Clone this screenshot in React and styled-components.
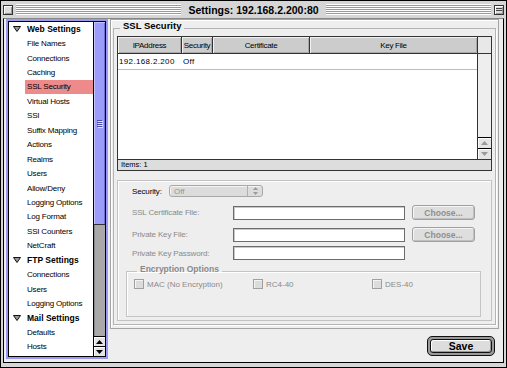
import React from 'react'
import styled, { createGlobalStyle } from 'styled-components'

const GlobalStyle = createGlobalStyle`
  body {
    margin: 0;
    background: #fff;
  }
  * {
    box-sizing: border-box;
  }
`

const sans = `"Liberation Sans", Arial, sans-serif`

const Window = styled.div`
  width: 507px;
  height: 368px;
  border: 1px solid #000;
  background: #d6d6d6;
  display: flex;
  flex-direction: column;
  font-family: ${sans};
  color: #000;
`

const TitleBar = styled.div`
  height: 17px;
  flex: none;
  display: flex;
  align-items: center;
  gap: 3px;
  padding: 0 2px;
`

const Stripes = styled.div`
  flex: 1;
  height: 11px;
  background: repeating-linear-gradient(to bottom, #fff 0 1px, #9a9a9a 1px 2px);
`

const Title = styled.div`
  font: bold 10.5px ${sans};
  padding: 0 4px;
  white-space: nowrap;
`

const WidgetBox = styled.div`
  width: 10px;
  height: 10px;
  border: 1px solid #333;
  background: #ddd;
  box-shadow: inset 1px 1px 0 #fff, inset -1px -1px 0 #999;
  display: flex;
  flex-direction: column;
  justify-content: center;
  gap: 1px;
  padding: 0 1px;
`

const ShadeLine = styled.div`
  height: 1px;
  background: #444;
`

const Content = styled.div`
  flex: 1;
  margin: 0 2px 4px 2px;
  border: 1px solid #000;
  border-top-color: #888;
  background: #eeeeee;
  padding: 0 4px 3px 2px;
  display: flex;
  gap: 2px;
  min-height: 0;
`

const Sidebar = styled.div`
  width: 102px;
  flex: none;
  border: 2px solid #9a9af2;
  display: flex;
`

const SidebarInner = styled.div`
  flex: 1;
  border: 1px solid #000;
  display: flex;
`

const List = styled.div`
  flex: 1;
  background: #fff;
  overflow: hidden;
`

const Row = styled.div`
  height: 14.45px;
  display: flex;
  align-items: center;
  padding-left: ${p => (p.$header ? '4px' : '16px')};
  gap: 6px;
`

const HeaderLabel = styled.span`
  font: bold 8.5px ${sans};
  white-space: nowrap;
`

const ItemLabel = styled.span`
  flex: 1;
  height: 100%;
  display: flex;
  align-items: center;
  padding-left: 2px;
  font-size: 8px;
  letter-spacing: -0.2px;
  white-space: nowrap;
  background: ${p => (p.$selected ? '#ef8a8a' : 'transparent')};
`

const SideScroll = styled.div`
  width: 12px;
  flex: none;
  border-left: 1px solid #000;
  display: flex;
  flex-direction: column;
`

const Thumb = styled.div`
  height: 203px;
  background: #9c9cfa;
  border-bottom: 1px solid #333;
  box-shadow: inset 1px 1px 0 #c4c4ff, inset -1px 0 0 #7070d0;
  display: flex;
  flex-direction: column;
  justify-content: center;
  align-items: center;
  gap: 1px;
`

const Grip = styled.div`
  width: 5px;
  height: 1px;
  background: #4a4aa8;
  box-shadow: 1px 1px 0 #e0e0ff;
`

const Track = styled.div`
  flex: 1;
  background: #a9a9a9;
  box-shadow: inset 1px 0 0 #888;
`

const ArrowBox = styled.div`
  height: ${p => p.$h || 10}px;
  flex: none;
  border-top: 1px solid #000;
  background: #e4e4e4;
  box-shadow: inset 1px 1px 0 #fff;
  display: flex;
  align-items: center;
  justify-content: center;
`

const RightCol = styled.div`
  flex: 1;
  min-width: 0;
  display: flex;
  flex-direction: column;
`

const Panel = styled.div`
  height: 310px;
  flex: none;
  border: 1px solid #a4a4a4;
  box-shadow: inset 1px 1px 0 #fff;
  padding: 1px 2px 3px 2px;
  display: flex;
  flex-direction: column;
  min-width: 0;
`

const Group = styled.fieldset`
  flex: 1;
  margin: 0;
  border: 1px solid #b4b4b4;
  box-shadow: 1px 1px 0 #fff;
  padding: 0 3px 3px 3px;
  display: flex;
  flex-direction: column;
  min-width: 0;
`

const Legend = styled.legend`
  font: bold ${p => p.$size || 9.5}px ${sans};
  color: ${p => (p.$muted ? '#8a8a8a' : '#000')};
  line-height: 9px;
  padding: 0 3px ${p => p.$pad || 6}px 3px;
  margin-left: 3px;
`

const Table = styled.div`
  height: 135px;
  flex: none;
  border: 1px solid #333;
  background: #fff;
  display: flex;
  flex-direction: column;
`

const TableMain = styled.div`
  flex: 1;
  display: flex;
`

const TableBody = styled.div`
  flex: 1;
  min-width: 0;
  display: flex;
  flex-direction: column;
`

const HeadRow = styled.div`
  height: 17px;
  flex: none;
  display: flex;
  border-bottom: 1px solid #333;
`

const HeadCell = styled.div`
  width: ${p => (p.$w ? `${p.$w}px` : 'auto')};
  flex: ${p => (p.$w ? 'none' : 1)};
  background: #cccccc;
  border-right: ${p => (p.$last ? 'none' : '1px solid #333')};
  box-shadow: inset 1px 1px 0 #f2f2f2, inset -1px -1px 0 #a8a8a8;
  display: flex;
  align-items: center;
  justify-content: center;
  font-size: 8px;
  letter-spacing: -0.3px;
  white-space: nowrap;
`

const DataRow = styled.div`
  height: 16px;
  display: flex;
  align-items: center;
  border-bottom: 1px solid #f0a6ac;
  font-size: 8px;
  letter-spacing: 0.35px;
`

const DataCell = styled.div`
  width: ${p => p.$w}px;
  padding-left: 1px;
  white-space: nowrap;
`

const TableScroll = styled.div`
  width: 14px;
  flex: none;
  border-left: 1px solid #333;
  display: flex;
  flex-direction: column;
`

const ScrollHead = styled.div`
  height: 17px;
  flex: none;
  border-bottom: 1px solid #333;
  background: #e8e8e8;
`

const ScrollTrack = styled.div`
  flex: 1;
  background: #eeeeee;
`

const Status = styled.div`
  height: 11px;
  flex: none;
  border-top: 1px solid #333;
  background: #dddddd;
  font-size: 7.5px;
  line-height: 10px;
  padding-left: 3px;
`

const Placard = styled.div`
  margin-top: 9px;
  height: 141px;
  flex: none;
  border: 1px solid #c2c2c2;
  box-shadow: inset 1px 1px 0 #fff;
  padding: 4px 0 5px 14px;
  display: flex;
  flex-direction: column;
  overflow: hidden;
`

const FieldRow = styled.div`
  display: flex;
  align-items: center;
  margin-top: ${p => p.$mt || 0}px;
  height: ${p => p.$h || 14}px;
`

const Label = styled.div`
  width: ${p => p.$w}px;
  flex: none;
  font-size: 8px;
  letter-spacing: -0.15px;
  color: ${p => (p.$muted ? '#8a8a8a' : '#000')};
  white-space: nowrap;
`

const Popup = styled.div`
  width: 94px;
  height: 12px;
  border: 1px solid #a8a8a8;
  border-radius: 3px;
  background: #dcdcdc;
  box-shadow: inset 1px 1px 0 #f4f4f4;
  display: flex;
  align-items: center;
  font-size: 8px;
  color: #959595;
`

const PopupText = styled.span`
  flex: 1;
  padding-left: 4px;
`

const PopupArrows = styled.span`
  width: 15px;
  height: 100%;
  border-left: 1px solid #b0b0b0;
  display: flex;
  align-items: center;
  justify-content: center;
`

const Input = styled.div`
  width: 172px;
  height: 14px;
  flex: none;
  border: 1px solid #6c6c6c;
  box-shadow: inset 1px 1px 0 #c8c8c8;
  background: #fff;
`

const ChooseButton = styled.div`
  width: 63px;
  height: 15px;
  margin-left: 7px;
  border: 1px solid #a0a0a0;
  border-radius: 3px;
  background: #dedede;
  box-shadow: inset 1px 1px 0 #f6f6f6, inset -1px -1px 0 #c0c0c0;
  display: flex;
  align-items: center;
  justify-content: center;
  font: bold 8.5px ${sans};
  color: #8e8e8e;
`

const EncGroup = styled.fieldset`
  margin: 5px 10px 0 -6px;
  height: 52px;
  flex: none;
  border: 1px solid #c4c4c4;
  box-shadow: inset 1px 1px 0 #fff;
  padding: 1px 0 0 7px;
  display: flex;
  align-items: flex-start;
  min-width: 0;
`

const CheckItem = styled.div`
  width: ${p => (p.$last ? 'auto' : '119px')};
  flex: none;
  display: flex;
  align-items: center;
  gap: 3px;
  font-size: 8px;
  color: #8a8a8a;
  white-space: nowrap;
`

const CheckBox = styled.span`
  width: 10px;
  height: 10px;
  border: 1px solid #a0a0a0;
  background: #dcdcdc;
  box-shadow: inset 1px 1px 0 #f4f4f4;
`

const Footer = styled.div`
  flex: 1;
  display: flex;
  justify-content: flex-end;
  align-items: flex-start;
  padding: 7px 4px 0 0;
`

const DefaultRing = styled.div`
  width: 68px;
  height: 20px;
  border: 1px solid #111;
  border-radius: 5px;
  background: #9a9a9a;
  padding: 2px;
  display: flex;
`

const SaveButton = styled.div`
  flex: 1;
  border: 1px solid #111;
  border-radius: 3px;
  background: #dddddd;
  box-shadow: inset 1px 1px 0 #fff, inset -1px -1px 0 #999;
  display: flex;
  align-items: center;
  justify-content: center;
  font: bold 10.5px ${sans};
`

const Disclosure = () => (
  <svg width="8" height="6" viewBox="0 0 8 6">
    <polygon points="0.5,0.5 7.5,0.5 4,5.5" fill="#9a9a9a" stroke="#111" strokeWidth="1" />
  </svg>
)

const Arrow = ({ up, color = '#000' }) => (
  <svg width="7" height="4" viewBox="0 0 7 4">
    <polygon points={up ? '3.5,0 7,4 0,4' : '0,0 7,0 3.5,4'} fill={color} />
  </svg>
)

const sidebarItems = [
  { label: 'Web Settings', header: true },
  { label: 'File Names' },
  { label: 'Connections' },
  { label: 'Caching' },
  { label: 'SSL Security', selected: true },
  { label: 'Virtual Hosts' },
  { label: 'SSI' },
  { label: 'Suffix Mapping' },
  { label: 'Actions' },
  { label: 'Realms' },
  { label: 'Users' },
  { label: 'Allow/Deny' },
  { label: 'Logging Options' },
  { label: 'Log Format' },
  { label: 'SSI Counters' },
  { label: 'NetCraft' },
  { label: 'FTP Settings', header: true },
  { label: 'Connections' },
  { label: 'Users' },
  { label: 'Logging Options' },
  { label: 'Mail Settings', header: true },
  { label: 'Defaults' },
  { label: 'Hosts' },
]

const columns = [
  { title: 'IPAddress', w: 64 },
  { title: 'Security', w: 31 },
  { title: 'Certificate', w: 97 },
  { title: 'Key File' },
]

const fileFields = [
  { label: 'SSL Certificate File:', mt: 8, choose: true },
  { label: 'Private Key File:', mt: 7, choose: true },
  { label: 'Private Key Password:', mt: 4 },
]

const ciphers = ['MAC (No Encryption)', 'RC4-40', 'DES-40']

export default function App() {
  return (
    <>
      <GlobalStyle />
      <Window>
        <TitleBar>
          <WidgetBox />
          <Stripes />
          <Title>Settings: 192.168.2.200:80</Title>
          <Stripes />
          <WidgetBox>
            <ShadeLine />
            <ShadeLine />
          </WidgetBox>
        </TitleBar>
        <Content>
          <Sidebar>
            <SidebarInner>
              <List>
                {sidebarItems.map((item, i) =>
                  item.header ? (
                    <Row key={i} $header>
                      <Disclosure />
                      <HeaderLabel>{item.label}</HeaderLabel>
                    </Row>
                  ) : (
                    <Row key={i}>
                      <ItemLabel $selected={item.selected}>{item.label}</ItemLabel>
                    </Row>
                  )
                )}
              </List>
              <SideScroll>
                <Thumb>
                  <Grip />
                  <Grip />
                  <Grip />
                  <Grip />
                </Thumb>
                <Track />
                <ArrowBox $h={10}><Arrow up /></ArrowBox>
                <ArrowBox $h={10}><Arrow /></ArrowBox>
              </SideScroll>
            </SidebarInner>
          </Sidebar>
          <RightCol>
            <Panel>
              <Group>
                <Legend>SSL Security</Legend>
                <Table>
                  <TableMain>
                    <TableBody>
                      <HeadRow>
                        {columns.map((c, i) => (
                          <HeadCell key={c.title} $w={c.w} $last={i === columns.length - 1}>
                            {c.title}
                          </HeadCell>
                        ))}
                      </HeadRow>
                      <DataRow>
                        <DataCell $w={64}>192.168.2.200</DataCell>
                        <DataCell $w={31}>Off</DataCell>
                      </DataRow>
                    </TableBody>
                    <TableScroll>
                      <ScrollHead />
                      <ScrollTrack />
                      <ArrowBox $h={11}><Arrow up color="#9a9a9a" /></ArrowBox>
                      <ArrowBox $h={11}><Arrow color="#9a9a9a" /></ArrowBox>
                    </TableScroll>
                  </TableMain>
                  <Status>Items: 1</Status>
                </Table>
                <Placard>
                  <FieldRow $h={12}>
                    <Label $w={37}>Security:</Label>
                    <Popup>
                      <PopupText>Off</PopupText>
                      <PopupArrows>
                        <svg width="5" height="8" viewBox="0 0 5 8">
                          <polygon points="2.5,0 5,3 0,3" fill="#9a9a9a" />
                          <polygon points="0,5 5,5 2.5,8" fill="#9a9a9a" />
                        </svg>
                      </PopupArrows>
                    </Popup>
                  </FieldRow>
                  {fileFields.map(f => (
                    <FieldRow key={f.label} $mt={f.mt} $h={15}>
                      <Label $w={101} $muted>{f.label}</Label>
                      <Input />
                      {f.choose && <ChooseButton>Choose...</ChooseButton>}
                    </FieldRow>
                  ))}
                  <EncGroup>
                    <Legend $muted $size={8.5} $pad={4}>Encryption Options</Legend>
                    {ciphers.map((c, i) => (
                      <CheckItem key={c} $last={i === ciphers.length - 1}>
                        <CheckBox />
                        {c}
                      </CheckItem>
                    ))}
                  </EncGroup>
                </Placard>
              </Group>
            </Panel>
            <Footer>
              <DefaultRing>
                <SaveButton>Save</SaveButton>
              </DefaultRing>
            </Footer>
          </RightCol>
        </Content>
      </Window>
    </>
  )
}
